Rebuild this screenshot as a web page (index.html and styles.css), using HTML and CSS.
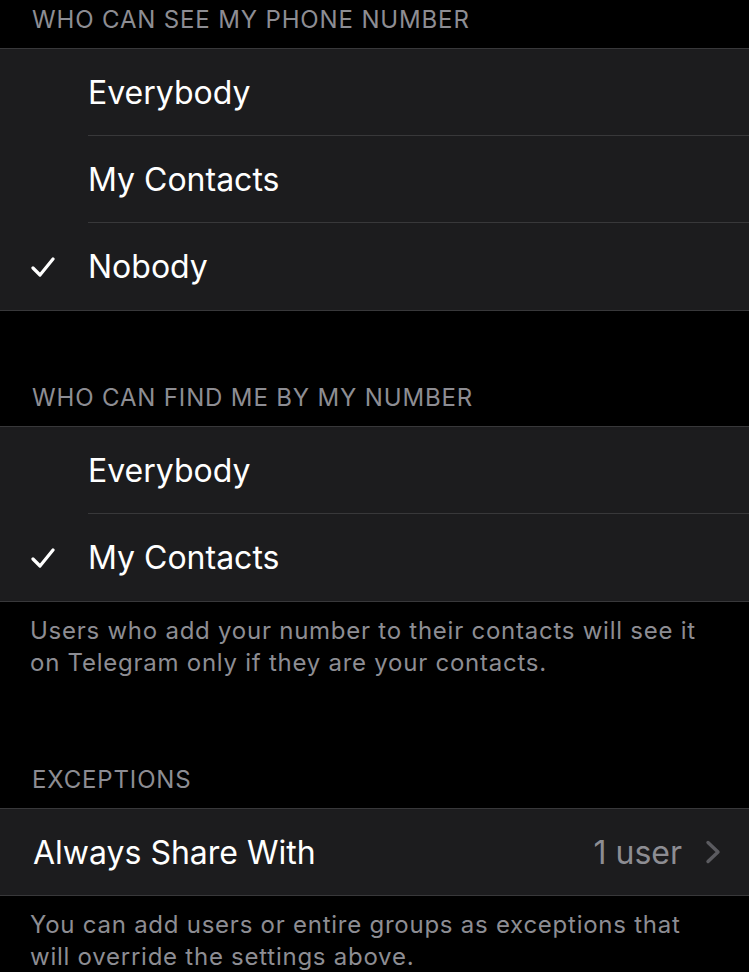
FILE: index.html
```html
<!DOCTYPE html>
<html>
<head>
  <link rel="stylesheet" href="styles.css">
</head>
<body>
  <div class="header first">WHO CAN SEE MY PHONE NUMBER</div>
  <div class="group">
    <div class="row">
      <div class="mark"></div>
      <div class="body">Everybody</div>
    </div>
    <div class="row">
      <div class="mark"></div>
      <div class="body">My Contacts</div>
    </div>
    <div class="row">
      <div class="mark">
        <svg width="24" height="20" viewBox="0 0 24 20"><path d="M2 11 L9 18 L22 2" fill="none" stroke="#fff" stroke-width="3.2" stroke-linecap="round" stroke-linejoin="round"/></svg>
      </div>
      <div class="body last">Nobody</div>
    </div>
  </div>

  <div class="header">WHO CAN FIND ME BY MY NUMBER</div>
  <div class="group">
    <div class="row">
      <div class="mark"></div>
      <div class="body">Everybody</div>
    </div>
    <div class="row">
      <div class="mark">
        <svg width="24" height="20" viewBox="0 0 24 20"><path d="M2 11 L9 18 L22 2" fill="none" stroke="#fff" stroke-width="3.2" stroke-linecap="round" stroke-linejoin="round"/></svg>
      </div>
      <div class="body last">My Contacts</div>
    </div>
  </div>
  <div class="footer">Users who add your number to their contacts will see it on Telegram only if they are your contacts.</div>

  <div class="header exceptions">EXCEPTIONS</div>
  <div class="group">
    <div class="link-row">
      <div class="title">Always Share With</div>
      <div class="value">1 user</div>
      <svg class="chevron" width="18" height="24" viewBox="0 0 18 24"><path d="M4 2.5 L14 12 L4 21.5" fill="none" stroke="#5b5b60" stroke-width="3.4" stroke-linecap="round" stroke-linejoin="round"/></svg>
    </div>
  </div>
  <div class="footer">You can add users or entire groups as exceptions that will override the settings above.</div>
</body>
</html>
```

FILE: styles.css
```css
body
{
   margin:0;
   background:#000;
   font-family: Inter, "Noto Sans", sans-serif;
   color:#fff;
}

.header
{
   color:#8d8d93;
   font-size:24px;
   letter-spacing:0.85px;
   line-height:28px;
   padding:73px 32px 14px 32px;
}
.header.first
{
   padding-top:6px;
}
.header.exceptions
{
   padding-top:87px;
}

.group
{
   background:#1c1c1e;
   border-top:1px solid #38383a;
   border-bottom:1px solid #38383a;
}

.row
{
   display:flex;
}
.mark
{
   width:88px;
   display:flex;
   align-items:center;
   padding-left:31px;
   box-sizing:border-box;
}
.body
{
   flex:1;
   height:87px;
   box-sizing:border-box;
   display:flex;
   align-items:center;
   font-size:32px;
   border-bottom:1px solid #38383a;
}
.body.last
{
   border-bottom:none;
}

.footer
{
   color:#8d8d93;
   font-size:24px;
   letter-spacing:0.75px;
   line-height:32px;
   padding:13px 30px 0 30px;
}

.link-row
{
   display:flex;
   align-items:center;
   height:86px;
   padding:0 27px 0 33px;
   font-size:32px;
}
.title
{
   flex:1;
}
.value
{
   color:#8d8d93;
   margin-right:22px;
}
.chevron
{
   display:block;
}
```
